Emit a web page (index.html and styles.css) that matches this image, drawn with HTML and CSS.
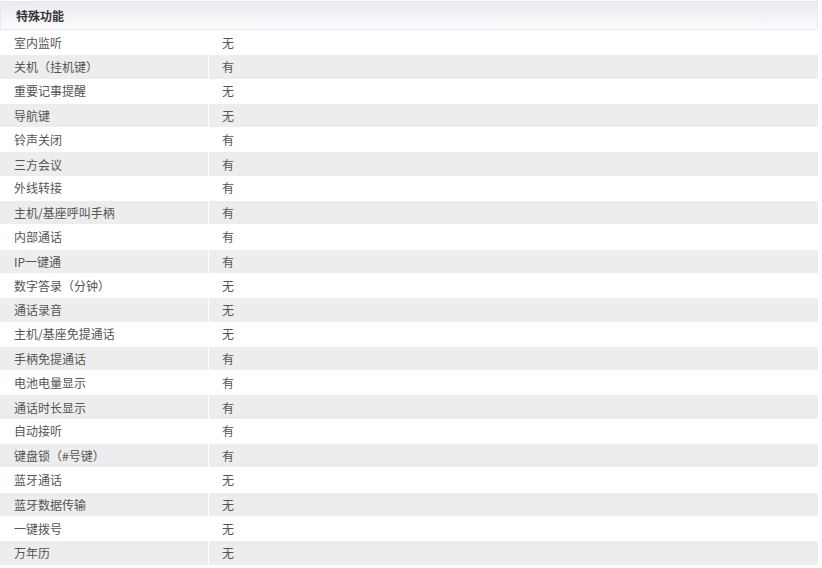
FILE: index.html
```html
<!DOCTYPE html>
<html lang="zh">
<head>
<meta charset="utf-8">
<link rel="stylesheet" href="styles.css">
</head>
<body>
<div class="spec">
  <div class="spec-head">特殊功能</div>
  <div class="row"><div class="k">室内监听</div><div class="v">无</div></div>
  <div class="row alt"><div class="k">关机（挂机键）</div><div class="v">有</div></div>
  <div class="row"><div class="k">重要记事提醒</div><div class="v">无</div></div>
  <div class="row alt"><div class="k">导航键</div><div class="v">无</div></div>
  <div class="row"><div class="k">铃声关闭</div><div class="v">有</div></div>
  <div class="row alt"><div class="k">三方会议</div><div class="v">有</div></div>
  <div class="row"><div class="k">外线转接</div><div class="v">有</div></div>
  <div class="row alt"><div class="k">主机/基座呼叫手柄</div><div class="v">有</div></div>
  <div class="row"><div class="k">内部通话</div><div class="v">有</div></div>
  <div class="row alt"><div class="k">IP一键通</div><div class="v">有</div></div>
  <div class="row"><div class="k">数字答录（分钟）</div><div class="v">无</div></div>
  <div class="row alt"><div class="k">通话录音</div><div class="v">无</div></div>
  <div class="row"><div class="k">主机/基座免提通话</div><div class="v">无</div></div>
  <div class="row alt"><div class="k">手柄免提通话</div><div class="v">有</div></div>
  <div class="row"><div class="k">电池电量显示</div><div class="v">有</div></div>
  <div class="row alt"><div class="k">通话时长显示</div><div class="v">有</div></div>
  <div class="row"><div class="k">自动接听</div><div class="v">有</div></div>
  <div class="row alt"><div class="k">键盘锁（#号键）</div><div class="v">有</div></div>
  <div class="row"><div class="k">蓝牙通话</div><div class="v">无</div></div>
  <div class="row alt"><div class="k">蓝牙数据传输</div><div class="v">无</div></div>
  <div class="row"><div class="k">一键拨号</div><div class="v">无</div></div>
  <div class="row alt"><div class="k">万年历</div><div class="v">无</div></div>
</div>
</body>
</html>
```
FILE: styles.css
```css
html, body {
  margin: 0;
  padding: 0;
  background: #fff;
}
body {
  font-family: "Noto Sans CJK SC", "Noto Sans", sans-serif;
  font-size: 12px;
  color: #555;
}
.spec {
  width: 818px;
  padding-top: 1px;
}
.spec-head {
  height: 27px;
  line-height: 27px;
  padding-left: 15px;
  font-weight: bold;
  color: #333;
  border: 1px solid #e8e8ee;
  background: linear-gradient(#ebebf2, #fbfbfd);
}
.row {
  display: grid;
  grid-template-columns: 208px 1fr;
  column-gap: 1px;
  height: 24.3px;
}
.row .k,
.row .v {
  display: flex;
  align-items: center;
}
.row .k {
  padding-left: 14px;
}
.row .v {
  padding-left: 13px;
}
.row.alt .k,
.row.alt .v {
  background: #ededed;
  margin: 1px 0 0;
}
```
